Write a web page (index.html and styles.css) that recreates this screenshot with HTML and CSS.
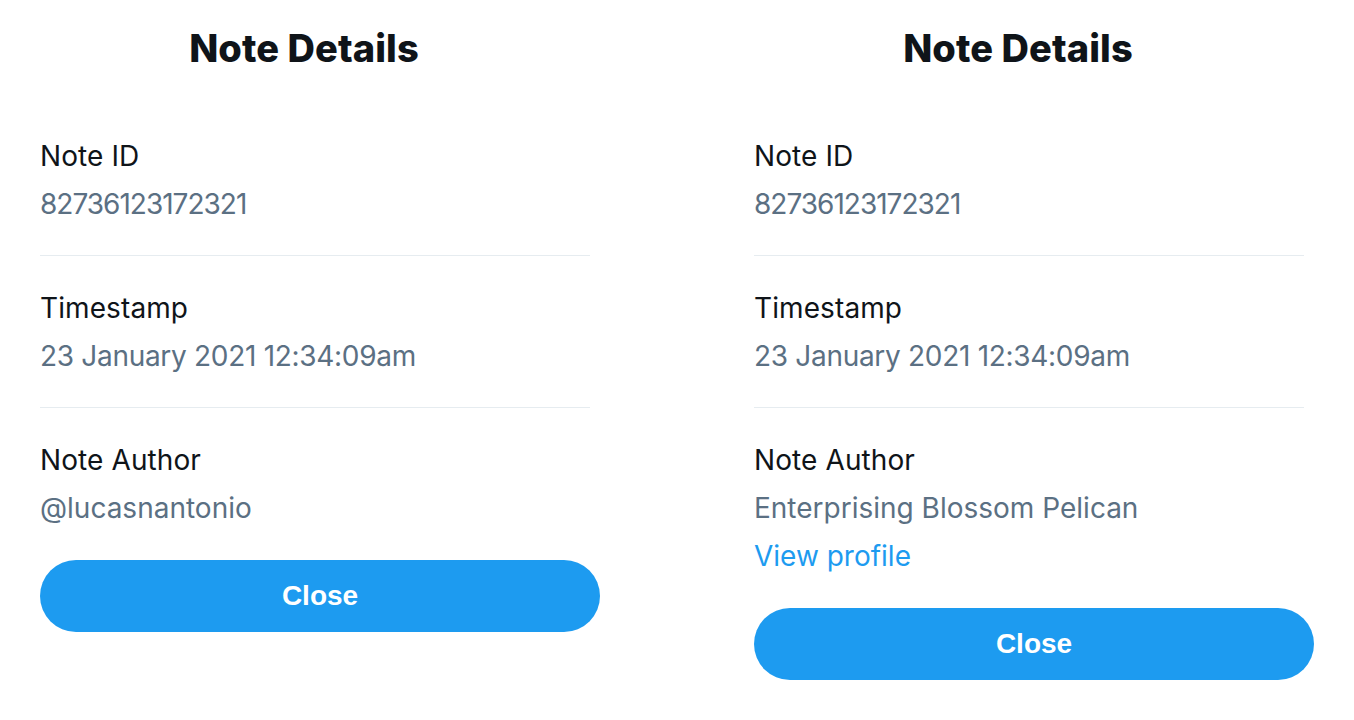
FILE: index.html
```html
<!DOCTYPE html>
<html>
<head>
<meta charset="utf-8">
<link rel="stylesheet" href="styles.css">
</head>
<body>
<div class="page">
  <section class="panel">
    <h1 class="title">Note Details</h1>
    <div class="row">
      <div class="label">Note ID</div>
      <div class="value id">82736123172321</div>
    </div>
    <div class="row">
      <div class="label">Timestamp</div>
      <div class="value time">23 January 2021 12:34:09am</div>
    </div>
    <div class="row last">
      <div class="label">Note Author</div>
      <div class="value">@lucasnantonio</div>
    </div>
    <button class="close">Close</button>
  </section>
  <section class="panel">
    <h1 class="title">Note Details</h1>
    <div class="row">
      <div class="label">Note ID</div>
      <div class="value id">82736123172321</div>
    </div>
    <div class="row">
      <div class="label">Timestamp</div>
      <div class="value time">23 January 2021 12:34:09am</div>
    </div>
    <div class="row last">
      <div class="label">Note Author</div>
      <div class="value">Enterprising Blossom Pelican</div>
      <a class="link" href="#">View profile</a>
    </div>
    <button class="close">Close</button>
  </section>
</div>
</body>
</html>
```
FILE: styles.css
```css
* { box-sizing: border-box; }
html, body { margin: 0; padding: 0; background: #ffffff; }
body { font-family: Inter, "Noto Sans", sans-serif; color: #0f1419; }
.page { display: flex; gap: 154px; padding-left: 40px; }
.panel { width: 560px; display: flex; flex-direction: column; }
.title {
  margin: 0;
  height: 96px;
  padding: 16px 32px 0 0;
  font-size: 38px;
  line-height: 64px;
  font-weight: 800;
  text-align: center;
  letter-spacing: 0.1px;
}
.row {
  margin-top: 36px;
  width: 550px;
  padding-bottom: 27px;
  border-bottom: 1px solid #e6ecf0;
  display: flex;
  flex-direction: column;
}
.row + .row { margin-top: 0; padding-top: 28px; }
.row.last { border-bottom: none; padding-bottom: 0; }
.label { font-size: 28px; line-height: 48px; color: #0f1419; letter-spacing: 0.1px; }
.value { font-size: 28px; line-height: 48px; color: #5b7083; }
.value.id { letter-spacing: -1px; }
.value.time { letter-spacing: -0.3px; }
.link { font-size: 28px; line-height: 48px; color: #1d9bf0; text-decoration: none; }
.close {
  margin-top: 28px;
  height: 72px;
  width: 560px;
  border: none;
  border-radius: 36px;
  background: #1d9bf0;
  color: #ffffff;
  font-family: "Liberation Sans", Arial, sans-serif;
  font-weight: 700;
  font-size: 28px;
  padding: 0;
}
```
